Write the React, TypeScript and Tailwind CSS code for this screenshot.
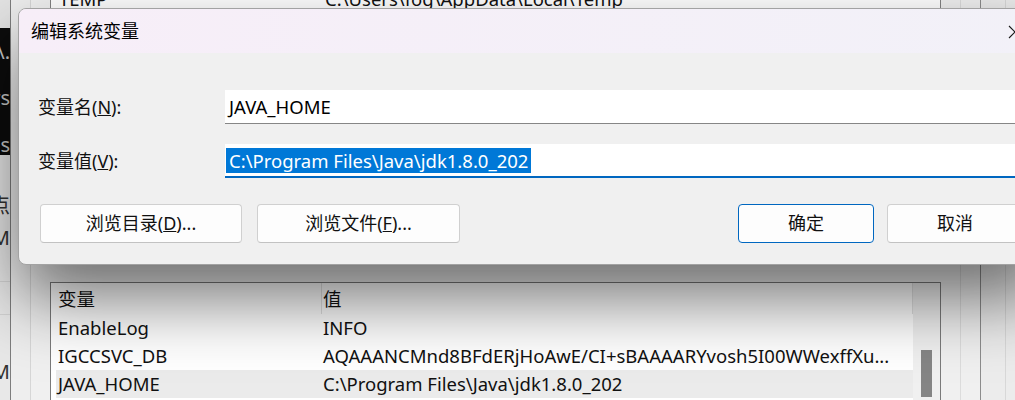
const font = "font-['Noto_Sans','Noto_Sans_CJK_SC',sans-serif]"

function Clip({ text, className }: { text: string; className: string }) {
    // right edge of a word that belongs to a window further left
    return (
        <div className={`flex justify-end overflow-hidden whitespace-nowrap ${className}`}>
            <span>{text}</span>
        </div>
    )
}

function Backdrop() {
    return (
        <div className="flex h-full">
            <div className="w-[10px] flex flex-col">
                <div className="h-[28px] bg-[#e4e4e4]" />
                <div className="h-[127px] bg-[#0c0c0c] text-[#c8c8c8] text-[20px] leading-[24px] pt-[12px] flex flex-col gap-[24px]">
                    <Clip text="\." className="h-[24px]" />
                    <Clip text="rs" className="h-[24px]" />
                    <Clip text="ss" className="h-[24px]" />
                </div>
                <div className="flex-1 bg-[#e8e8e8] text-[#333] text-[20px] leading-[26px] pt-[38px]">
                    <Clip text="盘点" className="h-[26px]" />
                    <Clip text="OM" className="h-[26px] mt-[6px]" />
                    <div className="mt-[30px] border-t border-[#d4d4d4]" />
                    <div className="mt-[32px] border-t border-[#d4d4d4]" />
                    <Clip text="M" className="h-[26px] mt-[44px]" />
                </div>
            </div>
            <div className="w-px bg-[#7d7d7d]" />
            <div className="w-[20px] bg-[#eeeeee] border-r border-[#d6d6d6]" />
            <div className="w-[19px] bg-[#f0f0f0]" />

            <div className="w-[891px] flex flex-col bg-[#f0f0f0]">
                <div className="h-[240px] bg-white border-x border-b border-[#828282] overflow-hidden">
                    <div className="-mt-[15px] h-[28px] ml-[5px] flex items-center text-[18.5px] text-[#111]">
                        <div className="w-[266px] pl-[3px]">TEMP</div>
                        <div className="pl-[3px]">C:\Users\fog\AppData\Local\Temp</div>
                    </div>
                </div>
                <div className="mt-[42px] flex-1 bg-white border-x border-t border-[#7a7a7a] flex">
                    <div className="w-[862px] flex flex-col text-[18.5px] text-[#111]">
                        <div className="h-[31px] flex items-stretch border-r border-[#e2e2e2] ml-[5px]">
                            <div className="w-[266px] pl-[2px] flex items-center border-r border-[#e2e2e2]">变量</div>
                            <div className="pl-[1px] flex items-center">值</div>
                        </div>
                        <Row name="EnableLog" value="INFO" />
                        <Row name="IGCCSVC_DB" value="AQAAANCMnd8BFdERjHoAwE/CI+sBAAAARYvosh5I00WWexffXu..." />
                        <Row name="JAVA_HOME" value="C:\Program Files\Java\jdk1.8.0_202" selected />
                    </div>
                    <div className="flex-1 bg-[#f0f0f0] pl-[8px] pt-[67px]">
                        <div className="w-[11px] h-[47px] bg-[#858585]" />
                    </div>
                </div>
            </div>

            <div className="w-[19px] bg-[#f0f0f0]" />
            <div className="w-px bg-[#dcdcdc]" />
            <div className="w-[19px] bg-[#f0f0f0]" />
            <div className="w-px bg-[#8c8c8c]" />
            <div className="w-[24px] bg-[#ececec]" />
            <div className="w-px bg-[#d8d8d8]" />
            <div className="flex-1 bg-[#ececec]" />
        </div>
    )
}

function Row({ name, value, selected }: { name: string; value: string; selected?: boolean }) {
    return (
        <div className={`h-[28px] ml-[5px] flex items-center whitespace-nowrap ${selected ? "bg-[#ebebeb]" : ""}`}>
            <div className="w-[266px] pl-[2px]">{name}</div>
            <div className="pl-[1px] overflow-hidden">{value}</div>
        </div>
    )
}

function Button({ children, primary, className = "" }: { children: React.ReactNode; primary?: boolean; className?: string }) {
    return (
        <button
            className={`h-[39px] flex items-center justify-center rounded-[4px] bg-[#fdfdfd] text-[18px] text-[#111] border ${
                primary ? "border-[#0067c0]" : "border-[#d0d0d0] border-b-[#c2c2c2]"
            } ${className}`}
        >
            {children}
        </button>
    )
}

function EditDialog() {
    return (
        <div className="absolute left-[18px] top-[8px] w-[1030px] rounded-[8px] border border-[#a2a2a2] bg-[#f0f0f0] overflow-hidden shadow-[0_34px_70px_rgba(0,0,0,0.55)]">
            <div className="h-[44px] flex items-center justify-between pl-[12px] pr-[25px] bg-linear-to-r from-[#f7eef8] to-[#f2f1f8]">
                <span className="text-[18px] text-black">编辑系统变量</span>
                <svg width="14" height="14" viewBox="0 0 14 14" className="mt-[2px]">
                    <path d="M1 1 L13 13 M13 1 L1 13" stroke="#1a1a1a" strokeWidth="1.1" fill="none" />
                </svg>
            </div>

            <div className="pt-[37px] pl-[19px] pr-[24px] pb-[21px]">
                <div className="flex items-center h-[34px]">
                    <label className="w-[187px] text-[18px] text-[#111]">
                        变量名(<u>N</u>):
                    </label>
                    <div className="flex-1 h-[34px] bg-white border-b border-[#868686] pl-[4px] flex items-center text-[18.5px] text-black">
                        JAVA_HOME
                    </div>
                </div>
                <div className="mt-[20px] flex items-center h-[34px]">
                    <label className="w-[187px] text-[18px] text-[#111]">
                        变量值(<u>V</u>):
                    </label>
                    <div className="flex-1 h-[34px] bg-white border-b-2 border-[#0067c0] pl-px flex items-center text-[18.5px]">
                        <span className="bg-[#0078d7] text-white px-[3px] leading-[25px] whitespace-nowrap">
                            C:\Program Files\Java\jdk1.8.0_202
                        </span>
                    </div>
                </div>

                <div className="mt-[26px] flex items-center">
                    <Button className="ml-[2px] w-[202px]">
                        浏览目录(<u>D</u>)...
                    </Button>
                    <Button className="ml-[15px] w-[203px]">
                        浏览文件(<u>F</u>)...
                    </Button>
                    <Button primary className="ml-auto w-[136px]">
                        确定
                    </Button>
                    <Button className="ml-[13px] w-[136px]">取消</Button>
                </div>
            </div>
        </div>
    )
}

export default function App() {
    return (
        <div className={`relative w-[1015px] h-[400px] overflow-hidden bg-[#ececec] ${font}`}>
            <Backdrop />
            <EditDialog />
        </div>
    )
}
